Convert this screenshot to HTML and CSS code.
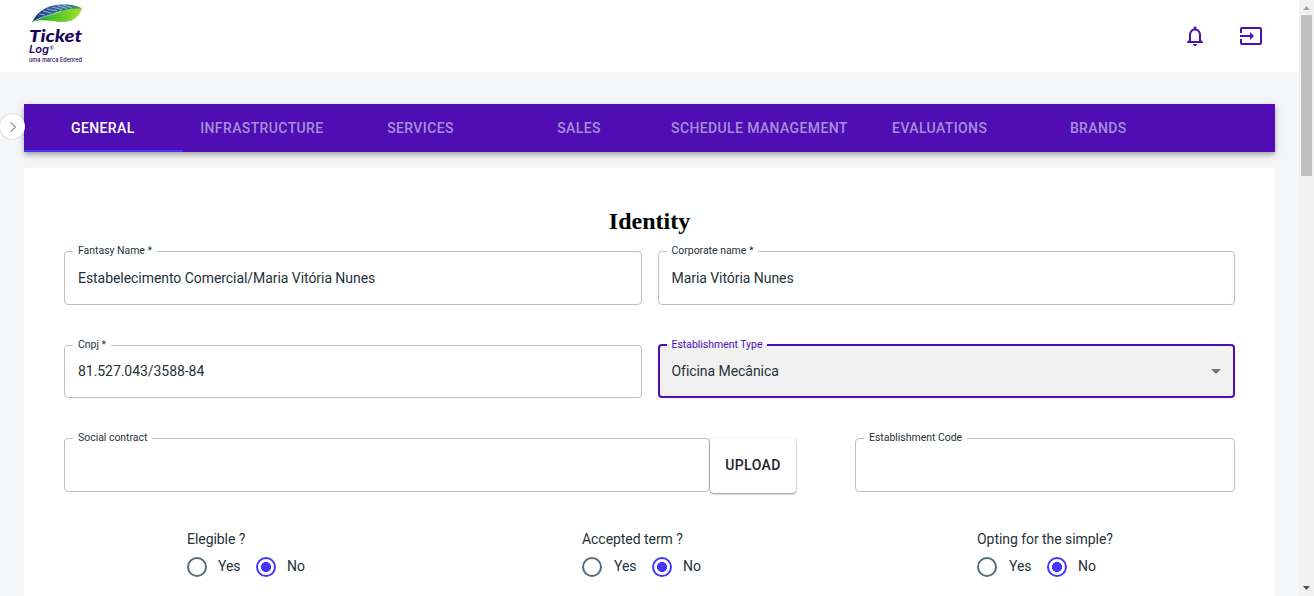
FILE: index.html
```html
<!DOCTYPE html>
<html lang="en">
<head>
<meta charset="utf-8">
<title>Establishment</title>
<link rel="stylesheet" href="styles.css">
</head>
<body>
<div class="app">
  <div class="page">
    <header class="topbar">
      <svg class="logo" width="60" height="66" viewBox="26 2 60 66">
        <defs>
          <linearGradient id="leaf" x1="0" x2="1"><stop offset="0" stop-color="#0c8f3c"/><stop offset=".45" stop-color="#4dc52c"/><stop offset="1" stop-color="#a4e02b"/></linearGradient>
          <linearGradient id="vein" x1="0" x2="1"><stop offset="0" stop-color="#173a78"/><stop offset=".6" stop-color="#3d6fa6"/><stop offset="1" stop-color="#1d9a58"/></linearGradient>
        </defs>
        <path d="M32 22.500C41 18 53 22 63 22C73 22 80 16 82 8.500C70 7 48 9 32 22.500Z" fill="url(#leaf)"/>
        <path d="M32 22.500C38 9 51 4 64 4.500C72 4.500 77 6 82 8.500C70 8 61 10 53 14C45 17 38 18 32 22.500Z" fill="url(#vein)"/>
        <path d="M39 14L45 15M43 11L51 13M47 9L57 11M52 7L62 9.500M57 5.500L67 8.500M63 5L72 8" stroke="#a9c8de" stroke-width=".8" fill="none"/>
        <path d="M33 22C42 16 52 15 61 11" stroke="#d9edf0" stroke-width=".7" fill="none"/>
        <text class="logo-name" x="29" y="41.500" textLength="53" lengthAdjust="spacingAndGlyphs">Ticket</text>
        <text class="logo-sub" x="29" y="53" textLength="20" lengthAdjust="spacingAndGlyphs">Log</text>
        <text class="logo-mark" x="49.500" y="50">®</text>
        <text class="logo-tag" x="29" y="61.500" textLength="53" lengthAdjust="spacingAndGlyphs">uma marca Edenred</text>
      </svg>
      <div class="actions">
        <svg width="24" height="24" viewBox="0 0 24 24" fill="#4f0db3"><path d="M12 22c1.1 0 2-.9 2-2h-4c0 1.1.9 2 2 2zm6-6v-5c0-3.070-1.630-5.640-4.500-6.320V4c0-.83-.67-1.500-1.500-1.500s-1.500.67-1.500 1.500v.68C7.640 5.360 6 7.920 6 11v5l-2 2v1h16v-1l-2-2zm-2 1H8v-6c0-2.480 1.510-4.500 4-4.500s4 2.020 4 4.500v6z"/></svg>
        <svg width="24" height="24" viewBox="0 0 24 24" fill="#4f0db3"><path d="M21 3.010H3c-1.100 0-2 .9-2 2V9h2V4.990h18v14.030H3V15H1v4.010c0 1.100.9 1.980 2 1.980h18c1.100 0 2-.88 2-1.980v-14c0-1.110-.9-2-2-2zM11 16l4-4-4-4v3H1v2h10v3z"/></svg>
      </div>
    </header>

    <main class="content">
      <button class="drawer-toggle" aria-label="Open menu"><svg width="10" height="12" viewBox="0 0 10 12"><path d="M2.500 1.200L7.500 6L2.500 10.800" fill="none" stroke="#8c8c8c" stroke-width="1.100"/></svg></button>
      <nav class="tabs">
        <a class="tab active">GENERAL</a>
        <a class="tab">INFRASTRUCTURE</a>
        <a class="tab">SERVICES</a>
        <a class="tab">SALES</a>
        <a class="tab wide">SCHEDULE MANAGEMENT</a>
        <a class="tab">EVALUATIONS</a>
        <a class="tab">BRANDS</a>
      </nav>

      <section class="card">
        <h2 class="title">Identity</h2>
        <div class="row halves">
          <fieldset class="field"><legend>Fantasy Name *</legend><span>Estabelecimento Comercial/Maria Vitória Nunes</span></fieldset>
          <fieldset class="field"><legend>Corporate name *</legend><span>Maria Vitória Nunes</span></fieldset>
        </div>
        <div class="row halves second">
          <fieldset class="field"><legend>Cnpj *</legend><span>81.527.043/3588-84</span></fieldset>
          <fieldset class="field focused"><legend>Establishment Type</legend><span>Oficina Mecânica</span><svg class="arrow" width="10" height="5" viewBox="0 0 10 5"><path d="M0 0h10L5 5z" fill="#757575"/></svg></fieldset>
        </div>
        <div class="row docs">
          <fieldset class="field"><legend>Social contract</legend></fieldset>
          <button class="upload">UPLOAD</button>
          <fieldset class="field"><legend>Establishment Code</legend></fieldset>
        </div>
        <div class="questions">
          <div class="question"><p>Elegible ?</p><div class="options"><i class="radio"></i><span>Yes</span><i class="radio checked"></i><span>No</span></div></div>
          <div class="question"><p>Accepted term ?</p><div class="options"><i class="radio"></i><span class="long">Yes</span><i class="radio checked"></i><span>No</span></div></div>
          <div class="question"><p>Opting for the simple?</p><div class="options"><i class="radio"></i><span class="long">Yes</span><i class="radio checked"></i><span>No</span></div></div>
        </div>
      </section>
    </main>
  </div>
  <div class="scrollbar">
    <svg width="15" height="15" viewBox="0 0 15 15"><path d="M4 10h7L7.500 6z" fill="#a3a3a3"/></svg>
    <div class="thumb"></div>
    <svg class="down" width="15" height="15" viewBox="0 0 15 15"><path d="M4 5h7L7.500 9z" fill="#505050"/></svg>
  </div>
</div>
</body>
</html>
```
FILE: styles.css
```css
* { box-sizing: border-box; }
body { margin: 0; font-family: Roboto, sans-serif; font-size: 14px; color: #263238; background: #f4f6f8; }
.app { display: flex; height: 596px; overflow: hidden; }
.page { flex: 1; min-width: 0; }

.topbar { display: flex; justify-content: space-between; height: 72px; padding: 2px 36px 0 26px; background: #fff; }
.logo { display: block; overflow: visible; }
.logo text { fill: #19065c; }
.logo .logo-name { font: italic 900 17.5px Lato, sans-serif; }
.logo .logo-sub { font: italic 600 11px Inter, sans-serif; }
.logo .logo-mark { font: 5px Lato, sans-serif; }
.logo .logo-tag { font: 500 5.5px Inter, sans-serif; }
.actions { display: flex; gap: 32px; padding-top: 22px; }

.content { position: relative; padding: 32px 24px 0; }
.drawer-toggle { position: absolute; left: 0; top: 42px; width: 25px; height: 25px; padding: 0; display: grid; place-items: center; border: 0; border-radius: 50%; background: #fff; box-shadow: 0 0 2px rgba(0,0,0,.25); z-index: 1; }
.tabs { display: flex; height: 48px; background: #4f0db3; box-shadow: 0 2px 4px -1px rgba(0,0,0,.2), 0 4px 5px rgba(0,0,0,.14), 0 1px 10px rgba(0,0,0,.12); }
.tab { min-width: 158.6px; padding: 0 12px; line-height: 48px; text-align: center; font-weight: 500; letter-spacing: .38px; color: #a390dc; }
.tab.wide { min-width: 202px; }
.tab.active { color: #fff; padding-right: 13px; box-shadow: inset 0 -2px #4338f5; }

.card { margin-top: 16px; height: 428px; padding: 39px 40px 0; background: #fff; }
.title { margin: 0; height: 39px; text-align: center; font: bold 24px/28px "Liberation Serif", serif; color: #000; }
.row { display: grid; height: 59px; margin-bottom: 35px; }
.halves { grid-template-columns: 1fr 1fr; column-gap: 16px; }
.halves.second { height: 58px; }
.docs { grid-template-columns: 646px 86px 380px; column-gap: 0; align-items: start; justify-content: start; height: 58px; margin-bottom: 39px; }
.docs .field { height: 59px; }
.docs .field:last-child { margin-left: 59px; width: 380px; }
.field { display: flex; min-width: 0; margin: 0; padding: 0 13px 0 8px; border: 1px solid #bfbfbf; border-radius: 4px; }
.field legend { height: 11px; padding: 0 5px; font-size: 10.5px; line-height: 9px; letter-spacing: -.03px; }
.field span { padding: 12px 0 0 5px; line-height: 18px; letter-spacing: -.055px; }
.second .field span { padding-top: 11px; }
.field.focused { align-items: flex-start; margin-top: -1px; padding: 0 12px 0 7px; border: 2px solid #4f0db3; background: #f1f1f1; }
.field.focused legend { color: #4f0db3; line-height: 11px; }
.second .field.focused span { padding-top: 12px; }
.arrow { margin: 19px 0 0 auto; }
.upload { height: 55px; margin-top: 5px; padding: 0 0 2px; border: 0; border-radius: 4px; background: #fff; color: #1f2327; font: 500 14px Roboto, sans-serif; letter-spacing: .4px; box-shadow: 0 1px 2px rgba(0,0,0,.45), 0 0 1px rgba(0,0,0,.2); }

.questions { display: grid; grid-template-columns: repeat(3, 379px); column-gap: 16px; }
.question { padding-left: 123px; }
.question p { margin: 0 0 9px; line-height: 18px; letter-spacing: -.05px; }
.options { display: flex; align-items: center; height: 20px; }
.options span { width: 38px; padding-left: 11px; line-height: 18px; margin-right: 11px; padding-bottom: 2px; letter-spacing: -.05px; }
.options .long { width: 39px; padding-left: 12px; }
.radio { flex: none; width: 20px; height: 20px; border: 2px solid #546e7a; border-radius: 50%; }
.radio.checked { border-color: #4338ff; background: radial-gradient(circle, #4338ff 4.800px, transparent 5.300px); }

.scrollbar { display: flex; flex-direction: column; align-items: center; width: 15px; background: #f1f1f1; }
.thumb { width: 11px; height: 161px; background: #c1c1c1; }
.scrollbar .down { margin-top: auto; }
```
